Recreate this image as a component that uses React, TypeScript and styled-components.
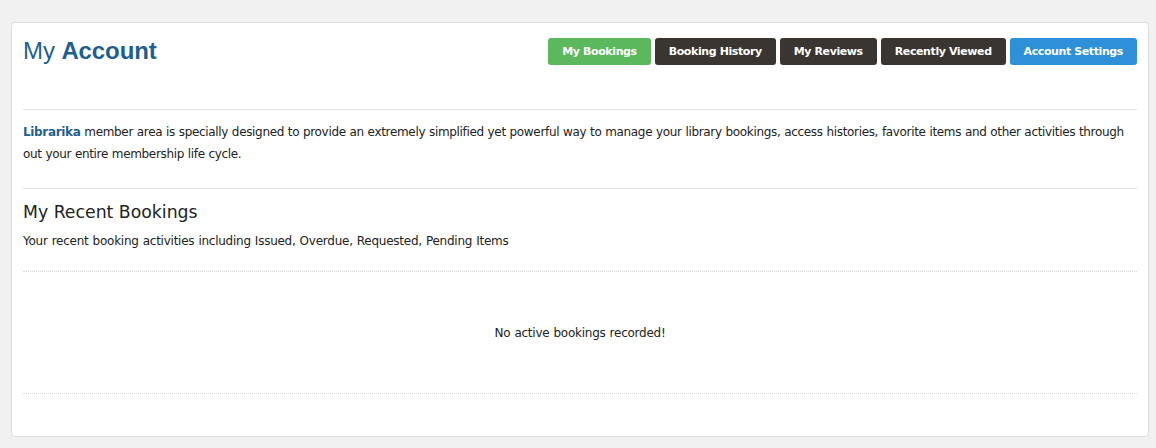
import React from "react";
import styled, { createGlobalStyle } from "styled-components";

const Global = createGlobalStyle`
  html, body { margin: 0; padding: 0; background: #f1f1f1; }
  body { font-family: "DejaVu Sans", Verdana, sans-serif; color: #222; }
`;

const Page = styled.div`
  padding: 22px 7px 12px 11px;
`;

const Card = styled.div`
  background: #fff;
  border: 1px solid #dcdcdc;
  border-radius: 4px;
  padding: 12px 11px 42px 11px;
`;

const Header = styled.div`
  display: flex;
  justify-content: space-between;
  align-items: flex-start;
  height: 74px;
  border-bottom: 1px solid #e3e3e3;
`;

const Title = styled.h1`
  margin: 2px 0 0 0;
  font-family: "Liberation Sans", Arial, sans-serif;
  font-size: 24px;
  font-weight: normal;
  color: #1f5f8f;
  letter-spacing: -0.1px;
  b { font-weight: bold; }
`;

const Tabs = styled.div`
  display: flex;
  gap: 4px;
  margin-top: 3px;
`;

const Tab = styled.button<{ $tone: "green" | "dark" | "blue" }>`
  height: 27px;
  border: none;
  border-radius: 3px;
  padding: 0 14px;
  font-family: "DejaVu Sans", Verdana, sans-serif;
  font-size: 11px;
  font-weight: bold;
  letter-spacing: -0.4px;
  color: #fff;
  cursor: pointer;
  background: ${(p) =>
    p.$tone === "green" ? "#5cb85c" : p.$tone === "blue" ? "#2d90d8" : "#3a3530"};
`;

const Text = styled.p`
  margin: 0;
  font-size: 12px;
  letter-spacing: -0.25px;
  word-spacing: 0.5px;
`;

const Intro = styled(Text)`
  padding: 11px 0 23px;
  line-height: 22px;
  letter-spacing: -0.33px;
  word-spacing: 0.3px;
  border-bottom: 1px solid #e3e3e3;
  b { color: #1f5f8f; }
`;

const SectionTitle = styled.h2`
  margin: 12px 0 0 0;
  font-size: 17.3px;
  font-weight: normal;
  line-height: 22px;
  color: #222;
`;

const SectionSub = styled(Text)`
  margin-top: 8px;
  line-height: 20px;
  padding-bottom: 20px;
  border-bottom: 1px dotted #d4d4d4;
`;

const Empty = styled(Text)`
  height: 121px;
  display: flex;
  align-items: center;
  justify-content: center;
  border-bottom: 1px dotted #d4d4d4;
`;

export default function App() {
  return (
    <>
      <Global />
      <Page>
        <Card>
          <Header>
            <Title>
              My <b>Account</b>
            </Title>
            <Tabs>
              <Tab $tone="green">My Bookings</Tab>
              <Tab $tone="dark">Booking History</Tab>
              <Tab $tone="dark">My Reviews</Tab>
              <Tab $tone="dark">Recently Viewed</Tab>
              <Tab $tone="blue">Account Settings</Tab>
            </Tabs>
          </Header>
          <Intro>
            <b>Librarika</b> member area is specially designed to provide an extremely simplified yet
            powerful way to manage your library bookings, access histories, favorite items and other
            activities through out your entire membership life cycle.
          </Intro>
          <SectionTitle>My Recent Bookings</SectionTitle>
          <SectionSub>
            Your recent booking activities including Issued, Overdue, Requested, Pending Items
          </SectionSub>
          <Empty as="div">No active bookings recorded!</Empty>
        </Card>
      </Page>
    </>
  );
}
